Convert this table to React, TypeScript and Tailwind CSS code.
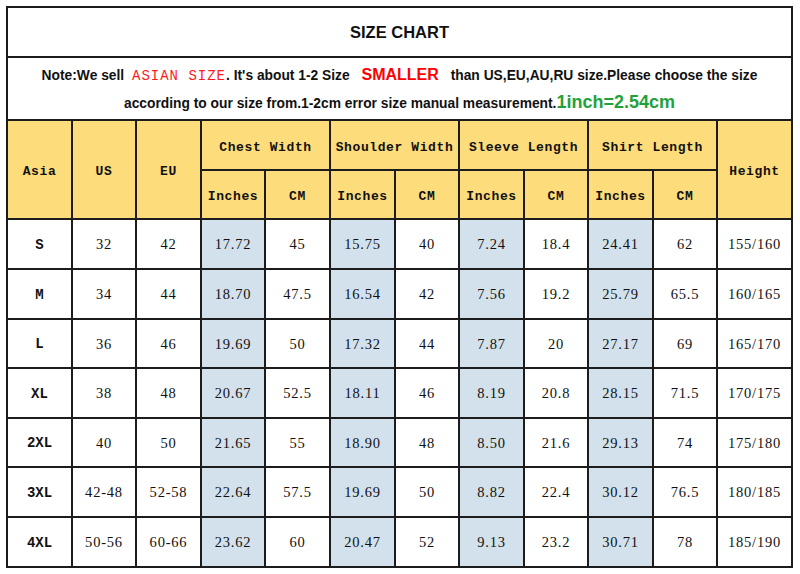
const mono = "font-['Liberation_Mono','DejaVu_Sans_Mono',monospace]"
const serif = "font-['Liberation_Serif','DejaVu_Serif',serif]"

const rows = [
  ['S', '32', '42', '17.72', '45', '15.75', '40', '7.24', '18.4', '24.41', '62', '155/160'],
  ['M', '34', '44', '18.70', '47.5', '16.54', '42', '7.56', '19.2', '25.79', '65.5', '160/165'],
  ['L', '36', '46', '19.69', '50', '17.32', '44', '7.87', '20', '27.17', '69', '165/170'],
  ['XL', '38', '48', '20.67', '52.5', '18.11', '46', '8.19', '20.8', '28.15', '71.5', '170/175'],
  ['2XL', '40', '50', '21.65', '55', '18.90', '48', '8.50', '21.6', '29.13', '74', '175/180'],
  ['3XL', '42-48', '52-58', '22.64', '57.5', '19.69', '50', '8.82', '22.4', '30.12', '76.5', '180/185'],
  ['4XL', '50-56', '60-66', '23.62', '60', '20.47', '52', '9.13', '23.2', '30.71', '78', '185/190'],
]

const blueCols = [3, 5, 7, 9]
const rowHeights = ['h-[48px]', 'h-[48px]', 'h-[47px]', 'h-[48px]', 'h-[47px]', 'h-[48px]', 'h-[48px]']

export default function App() {
  return (
    <div className="w-[800px] h-[574px] bg-white pt-[6px] pl-[6px]">
      <div className="grid w-[787px] grid-cols-[63px_62px_63px_62px_63px_63px_62px_63px_62px_63px_62px_73px] gap-[2px] bg-[#1c1c1c] p-[2px] text-[#111]">
        {/* Title */}
        <div className="col-span-12 h-[48px] bg-white flex items-center justify-center font-['Liberation_Sans',Arial,sans-serif] font-bold text-[16.5px]">
          SIZE CHART
        </div>

        {/* Note */}
        <div className="col-span-12 h-[61px] bg-white flex flex-col items-center justify-center font-['Liberation_Sans',Arial,sans-serif] font-bold text-[13.8px] leading-[26px] pt-[2px]">
          <div>
            Note:We sell{' '}
            <span className={`${mono} font-normal text-[#ff1a1a] text-[14px] tracking-[1px] ml-1`}>ASIAN SIZE</span>. It's about 1-2 Size{' '}
            <span className="text-[#ff0000] text-[16px] ml-2 mr-2">SMALLER</span> than US,EU,AU,RU size.Please choose the size
          </div>
          <div>
            according to our size from.1-2cm error size manual measurement.
            <span className="text-[#1fa23a] text-[18px]">1inch=2.54cm</span>
          </div>
        </div>

        {/* Header */}
        <HeadCell className="row-span-2">Asia</HeadCell>
        <HeadCell className="row-span-2">US</HeadCell>
        <HeadCell className="row-span-2">EU</HeadCell>
        <HeadCell className="col-span-2 h-[48px]">Chest Width</HeadCell>
        <HeadCell className="col-span-2 h-[48px]">Shoulder Width</HeadCell>
        <HeadCell className="col-span-2 h-[48px]">Sleeve Length</HeadCell>
        <HeadCell className="col-span-2 h-[48px]">Shirt Length</HeadCell>
        <HeadCell className="row-span-2">Height</HeadCell>
        {['Inches', 'CM', 'Inches', 'CM', 'Inches', 'CM', 'Inches', 'CM'].map((t, i) => (
          <HeadCell key={i} className="h-[47px]">{t}</HeadCell>
        ))}

        {/* Data */}
        {rows.map((r, ri) =>
          r.map((v, ci) => (
            <div
              key={ri + '-' + ci}
              className={`${rowHeights[ri]} flex items-center justify-center pt-[2px] ${blueCols.includes(ci) ? 'bg-[#d3e1ec]' : 'bg-white'} ${
                ci === 0 ? `${mono} font-bold text-[14px]` : `${serif} text-[14.5px] tracking-[0.8px]`
              }`}
            >
              {v}
            </div>
          ))
        )}
      </div>
    </div>
  )
}

function HeadCell({ children, className = '' }: { children: React.ReactNode; className?: string }) {
  return (
    <div className={`bg-[#fddc7c] flex items-center justify-center pt-[5px] ${mono} font-bold text-[13px] tracking-[0.6px] whitespace-nowrap ${className}`}>
      {children}
    </div>
  )
}
